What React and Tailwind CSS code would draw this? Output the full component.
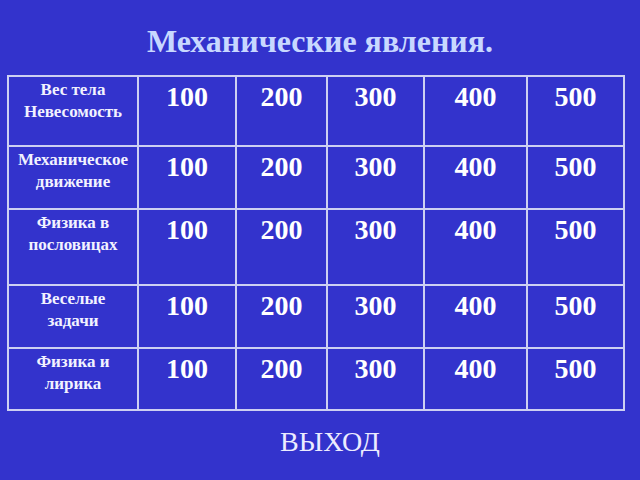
import React from 'react';

const rows = [
  ['Вес тела', 'Невесомость'],
  ['Механическое', 'движение'],
  ['Физика в', 'пословицах'],
  ['Веселые', 'задачи'],
  ['Физика и', 'лирика'],
];

const points = [100, 200, 300, 400, 500];

const App = () => {
  return (
    <div className="w-[640px] h-[480px] bg-[#3333cc] font-['Liberation_Serif','Times_New_Roman',serif] overflow-hidden">
      {/* Заголовок */}
      <div className="h-[75px] pt-[23px] text-center">
        <h1 className="text-[32px] leading-[36px] font-bold text-[#c8d8ff]">
          Механические явления.
        </h1>
      </div>

      {/* Таблица вопросов */}
      <div className="ml-[7px] w-fit grid grid-cols-[128px_96px_89px_95px_101px_95px] grid-rows-[68px_61px_74px_61px_60px] gap-[2px] p-[2px] bg-[#cdd0f2]">
        {rows.map((label, i) => (
          <React.Fragment key={i}>
            <div className="bg-[#3333cc] pt-[2px] text-center text-[17px] leading-[22px] font-bold text-[#f2f2ff]">
              <div>{label[0]}</div>
              <div>{label[1]}</div>
            </div>
            {points.map((p) => (
              <div key={p} className="bg-[#3333cc] pt-[6px] text-center text-[28px] leading-[28px] font-bold text-white">
                {p}
              </div>
            ))}
          </React.Fragment>
        ))}
      </div>

      {/* Выход */}
      <div className="mt-[15px] pl-[20px] text-center text-[28px] leading-[32px] text-[#ececff]">
        ВЫХОД
      </div>
    </div>
  );
};

export default App;
